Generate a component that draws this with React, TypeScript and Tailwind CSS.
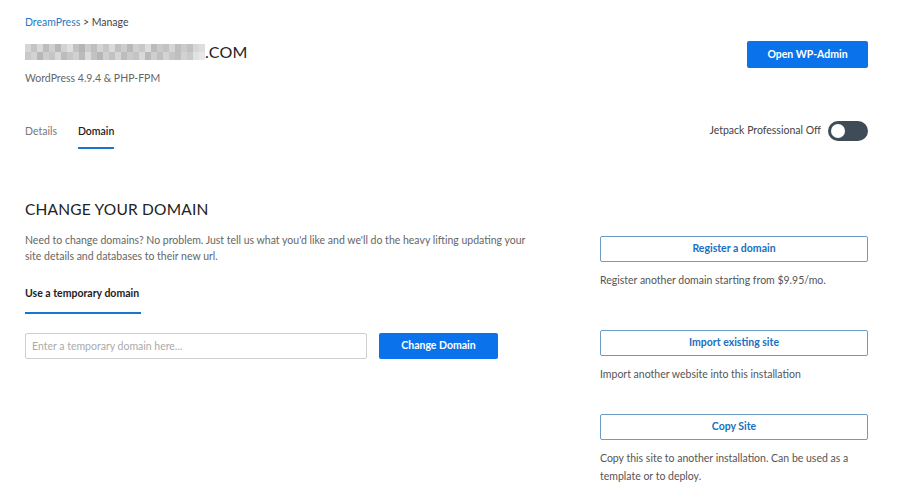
import React from "react";

const blurTop = [
  "bg-[#d6d6d6]", "bg-[#c4c4c4]", "bg-[#d9d9d9]", "bg-[#bdbdbd]", "bg-[#cfcfcf]", "bg-[#b8b8b8]",
  "bg-[#d2d2d2]", "bg-[#e0e0e0]", "bg-[#c2c2c2]", "bg-[#b5b5b5]", "bg-[#cccccc]", "bg-[#bfbfbf]",
  "bg-[#d4d4d4]", "bg-[#c6c6c6]", "bg-[#dadada]", "bg-[#c0c0c0]", "bg-[#cdcdcd]", "bg-[#b9b9b9]",
  "bg-[#d0d0d0]", "bg-[#c8c8c8]", "bg-[#dddddd]", "bg-[#bbbbbb]", "bg-[#cacaca]", "bg-[#c3c3c3]",
  "bg-[#d5d5d5]", "bg-[#bebebe]", "bg-[#cbcbcb]", "bg-[#c1c1c1]", "bg-[#d7d7d7]", "bg-[#dedede]",
];
const blurBottom = [
  "bg-[#c9c9c9]", "bg-[#d3d3d3]", "bg-[#b7b7b7]", "bg-[#cecece]", "bg-[#c5c5c5]", "bg-[#d8d8d8]",
  "bg-[#bcbcbc]", "bg-[#c7c7c7]", "bg-[#d1d1d1]", "bg-[#bababa]", "bg-[#dcdcdc]", "bg-[#c3c3c3]",
  "bg-[#b6b6b6]", "bg-[#d0d0d0]", "bg-[#c2c2c2]", "bg-[#d6d6d6]", "bg-[#bdbdbd]", "bg-[#cbcbcb]",
  "bg-[#c4c4c4]", "bg-[#d9d9d9]", "bg-[#b9b9b9]", "bg-[#cfcfcf]", "bg-[#c0c0c0]", "bg-[#d4d4d4]",
  "bg-[#c6c6c6]", "bg-[#bfbfbf]", "bg-[#d2d2d2]", "bg-[#cacaca]", "bg-[#e2e2e2]", "bg-[#e8e8e8]",
];

const actions = [
  { label: "Register a domain", text: "Register another domain starting from $9.95/mo.", gap: "mb-[39px]" },
  { label: "Import existing site", text: "Import another website into this installation", gap: "mb-[29px]" },
  {
    label: "Copy Site",
    text: "Copy this site to another installation. Can be used as a template or to deploy.",
    gap: "",
  },
];

const BlurredName = () => (
  <div className="flex flex-col w-[180px]">
    <div className="flex">
      {blurTop.map((c, i) => (
        <span key={i} className={`h-[8px] w-[6px] ${c}`} />
      ))}
    </div>
    <div className="flex">
      {blurBottom.map((c, i) => (
        <span key={i} className={`h-[8px] w-[6px] ${c}`} />
      ))}
    </div>
  </div>
);

export default function App() {
  return (
    <div className="w-[900px] h-[500px] bg-white overflow-hidden pl-[25px] pr-[32px] pt-[15px] font-['Lato',sans-serif] text-[#333]">
      {/* header */}
      <div className="flex justify-between">
        <div>
          <div className="text-[10.5px] leading-[14px]">
            <span className="text-[#1f7ac4]">DreamPress</span>
            <span className="text-[#444]"> &gt; Manage</span>
          </div>
          <div className="mt-[13px] flex items-center h-[20px]">
            <BlurredName />
            <span className="text-[16px] leading-[20px] text-[#222] tracking-[0.3px]">.COM</span>
          </div>
          <div className="mt-[9px] text-[10.5px] leading-[14px] text-[#666]">WordPress 4.9.4 &amp; PHP-FPM</div>
        </div>
        <button className="mt-[26px] h-[27px] w-[121px] rounded-[2px] bg-[#0a73eb] text-white text-[10.5px] font-bold">
          Open WP-Admin
        </button>
      </div>

      {/* tabs */}
      <div className="mt-[39px] flex justify-between items-start">
        <div className="flex gap-[21px] text-[10.5px]">
          <div className="h-[25px] text-[#777]">Details</div>
          <div className="h-[25px] text-[#222] font-semibold border-b-2 border-[#1a76c8]">Domain</div>
        </div>
        <div className="flex items-center gap-[7px] -mt-[3px]">
          <span className="text-[10.5px] text-[#444]">Jetpack Professional Off</span>
          <div className="w-[40px] h-[20px] rounded-full bg-[#3f4b57] flex items-center pl-[3px]">
            <span className="w-[14px] h-[14px] rounded-full bg-white" />
          </div>
        </div>
      </div>

      {/* body */}
      <div className="mt-[50px] flex justify-between">
        <div className="w-[512px]">
          <h1 className="text-[15.5px] leading-[20px] text-[#222] tracking-[0.2px]">CHANGE YOUR DOMAIN</h1>
          <p className="mt-[13px] text-[10.5px] leading-[16px] text-[#666]">
            Need to change domains? No problem. Just tell us what you'd like and we'll do the heavy lifting updating your
            site details and databases to their new url.
          </p>
          <div className="mt-[22px] whitespace-nowrap text-[10.5px] font-bold text-[#222] pb-[10px] border-b-2 border-[#1a76c8] w-[116px]">
            Use a temporary domain
          </div>
          <div className="mt-[19px] flex gap-[12px]">
            <input
              placeholder="Enter a temporary domain here..."
              className="w-[342px] h-[26px] border border-[#cfcfcf] rounded-[2px] px-[6px] text-[10.5px] placeholder:text-[#aaa] outline-none"
            />
            <button className="w-[119px] h-[26px] rounded-[2px] bg-[#0a73eb] text-white text-[10.5px] font-bold">
              Change Domain
            </button>
          </div>
        </div>

        <div className="w-[268px] mt-[35px]">
          {actions.map((a) => (
            <div key={a.label} className={a.gap}>
              <button className="w-full h-[26px] rounded-[2px] border border-[#6c9cc4] text-[#1a6fc0] text-[10.5px] font-bold">
                {a.label}
              </button>
              <p className="mt-[9px] text-[10.5px] leading-[18px] text-[#555]">{a.text}</p>
            </div>
          ))}
        </div>
      </div>
    </div>
  );
}
